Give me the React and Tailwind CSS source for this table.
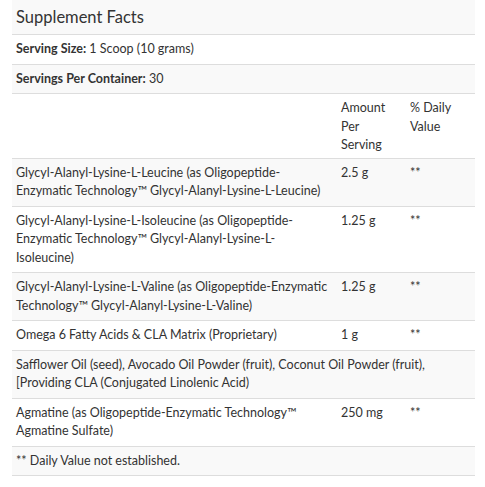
import React from "react";

const rows = [
  {
    name: "Glycyl-Alanyl-Lysine-L-Leucine (as Oligopeptide-Enzymatic Technology™ Glycyl-Alanyl-Lysine-L-Leucine)",
    amount: "2.5 g",
    dv: "**",
  },
  {
    name: "Glycyl-Alanyl-Lysine-L-Isoleucine (as Oligopeptide-Enzymatic Technology™ Glycyl-Alanyl-Lysine-L-Isoleucine)",
    amount: "1.25 g",
    dv: "**",
  },
  {
    name: "Glycyl-Alanyl-Lysine-L-Valine (as Oligopeptide-Enzymatic Technology™ Glycyl-Alanyl-Lysine-L-Valine)",
    amount: "1.25 g",
    dv: "**",
  },
  {
    name: "Omega 6 Fatty Acids & CLA Matrix (Proprietary)",
    amount: "1 g",
    dv: "**",
  },
  {
    name: "Safflower Oil (seed), Avocado Oil Powder (fruit), Coconut Oil Powder (fruit), [Providing CLA (Conjugated Linolenic Acid)",
    full: true,
  },
  {
    name: "Agmatine (as Oligopeptide-Enzymatic Technology™ Agmatine Sulfate)",
    amount: "250 mg",
    dv: "**",
  },
];

const cell = "px-[4px] py-[5px] align-top";

const App = () => {
  return (
    <div className="bg-white w-[485px] h-[487px] px-[12px] font-['Lato',sans-serif] text-[#333] text-[12.5px] leading-[18.5px]">
      <table className="w-[463px] border-collapse table-fixed">
        <colgroup>
          <col />
          <col className="w-[69px]" />
          <col className="w-[69px]" />
        </colgroup>
        <tbody>
          {/* Title */}
          <tr className="bg-[#f9f9f9] border-b border-[#ddd]">
            <td colSpan={3} className="px-[4px] pt-[7px] pb-[7px] text-[16.5px] leading-[20px]">
              Supplement Facts
            </td>
          </tr>
          <tr className="border-b border-[#ddd]">
            <td colSpan={3} className={cell}>
              <span className="font-bold">Serving Size:</span> 1 Scoop (10 grams)
            </td>
          </tr>
          <tr className="bg-[#f9f9f9] border-b border-[#ddd]">
            <td colSpan={3} className={cell}>
              <span className="font-bold">Servings Per Container:</span> 30
            </td>
          </tr>

          {/* Column headings */}
          <tr className="border-b border-[#ddd]">
            <td className={`${cell} pb-[3px]`}></td>
            <td className={`${cell} pb-[3px] pr-[10px]`}>Amount Per Serving</td>
            <td className={`${cell} pb-[3px]`}>% Daily Value</td>
          </tr>

          {/* Ingredients */}
          {rows.map((row, i) => (
            <tr
              key={i}
              className={`border-b border-[#ddd] ${i % 2 === 0 ? "bg-[#f9f9f9]" : ""}`}
            >
              {row.full ? (
                <td colSpan={3} className={cell}>{row.name}</td>
              ) : (
                <>
                  <td className={cell}>{row.name}</td>
                  <td className={cell}>{row.amount}</td>
                  <td className={cell}>{row.dv}</td>
                </>
              )}
            </tr>
          ))}

          <tr className="bg-[#f9f9f9] border-b border-[#ddd]">
            <td colSpan={3} className={cell}>
              ** Daily Value not established.
            </td>
          </tr>
        </tbody>
      </table>
    </div>
  );
};

export default App;
